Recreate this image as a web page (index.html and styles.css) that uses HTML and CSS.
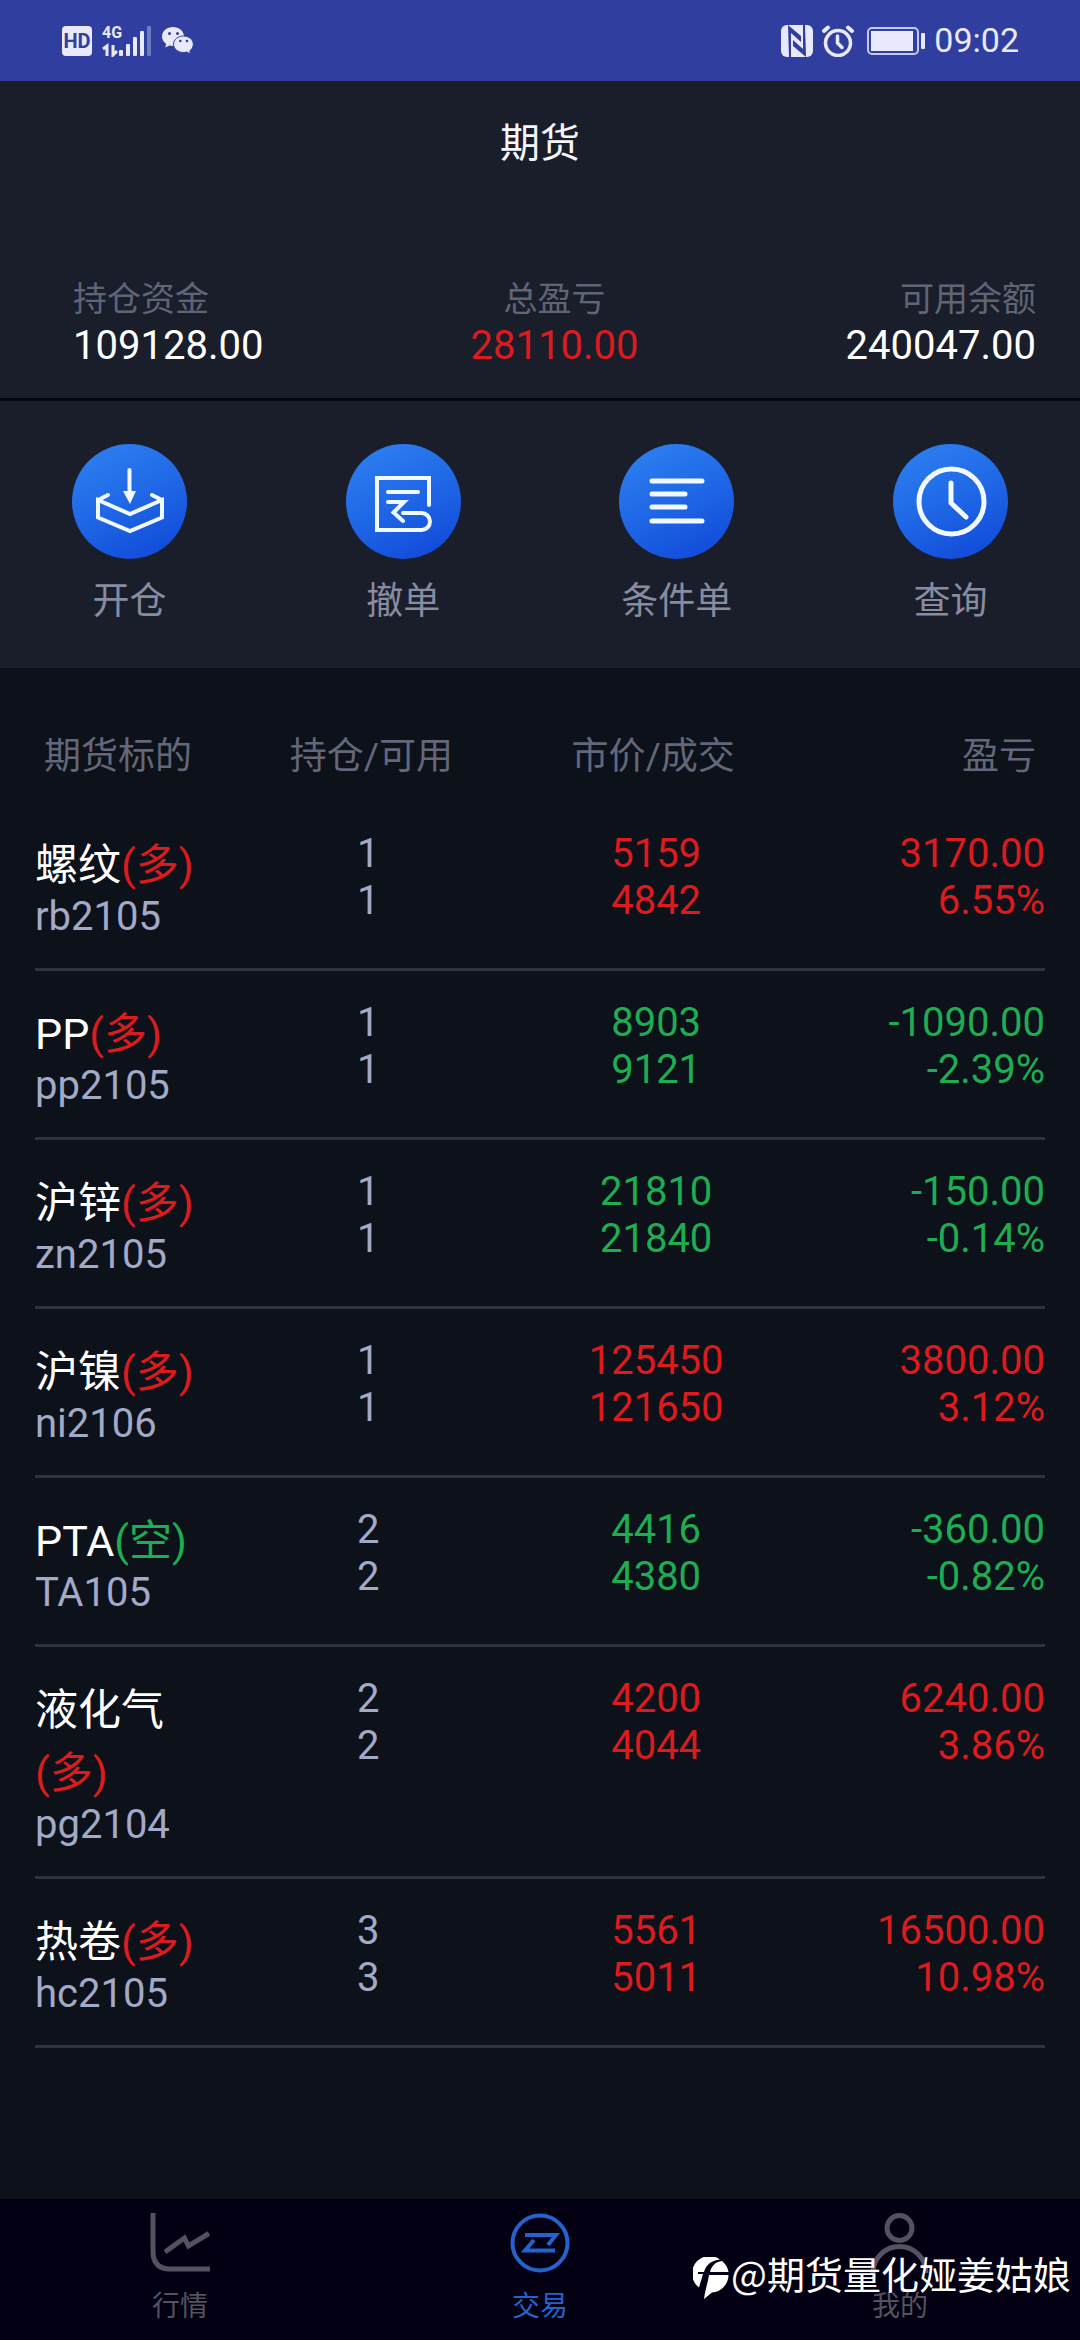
FILE: index.html
```html
<!DOCTYPE html>
<html lang="zh-CN">
<head>
<meta charset="utf-8">
<meta name="viewport" content="width=device-width, initial-scale=1">
<title>期货</title>
<link rel="stylesheet" href="styles.css">
</head>
<body>
<div class="status">
  <div class="status-left">
    <span class="hd">HD</span>
    <div class="signal">
      <span class="net">4G</span>
      <svg width="50" height="32" viewBox="0 0 50 32" aria-hidden="true">
        <path d="M1 24l4-3v10M11 20v10l4-4" fill="none" stroke="#e8e9fa" stroke-width="3"/>
        <g fill="#e8e9fa">
          <rect x="17" y="25" width="4" height="6" rx="1"/>
          <rect x="24" y="19" width="4" height="12" rx="1"/>
          <rect x="31" y="12" width="4" height="19" rx="1"/>
          <rect x="38" y="6" width="4" height="25" rx="1"/>
          <rect x="45" y="1" width="4" height="30" rx="1" opacity=".35"/>
        </g>
      </svg>
    </div>
    <svg width="32" height="30" viewBox="0 0 32 30" aria-hidden="true">
      <path d="M11 1C5 1 0 5 0 10.500C0 13.500 1.500 16 4 17.800L3.400 21.500L7.500 19.400C8.600 19.700 9.800 19.900 11 19.900C17 19.900 22 15.700 22 10.500C22 5 17 1 11 1z" fill="#e8e9fa"/>
      <path d="M21.500 10C16 10 11.500 13.600 11.500 18.200S16 26.500 21.500 26.500C22.700 26.500 23.800 26.300 24.800 26L28.600 28L27.800 24.800C30 23.300 31.300 21 31.300 18.200C31.300 13.600 27 10 21.500 10z" fill="#e8e9fa" stroke="#303f9f" stroke-width="1"/>
      <g fill="#303f9f"><circle cx="7.500" cy="7.500" r="1.500"/><circle cx="15.500" cy="7.500" r="1.500"/><circle cx="18.300" cy="15" r="1.300"/><circle cx="25" cy="15" r="1.300"/></g>
    </svg>
  </div>
  <div class="status-right">
    <svg width="32" height="32" viewBox="0 0 32 32" aria-hidden="true">
      <rect width="32" height="32" rx="6" fill="#e8e9fa"/>
      <path d="M7 0L20 11V17L10 8V32H8zM25 32L12 21V15L22 24V0H24z" fill="#303f9f"/>
    </svg>
    <svg width="32" height="32" viewBox="0 0 32 32" fill="none" stroke="#e8e9fa" stroke-linecap="round" aria-hidden="true">
      <circle cx="16" cy="18" r="12.500" stroke-width="3.500"/>
      <path d="M15.500 11V18L20 22.500" stroke-width="3.500"/>
      <path d="M2 6L6 2.500M30 6L26 2.500" stroke-width="4"/>
    </svg>
    <svg class="battery" width="58" height="28" viewBox="0 0 58 28" aria-hidden="true">
      <rect x="1" y="1" width="50" height="26" rx="4" fill="none" stroke="#c3c8ef" stroke-width="2"/>
      <rect x="4" y="4" width="42" height="20" fill="#e8e9fa"/>
      <rect x="54" y="6" width="4" height="16" rx="1" fill="#e8e9fa"/>
    </svg>
    <time class="clock">09:02</time>
  </div>
</div>

<header class="top">
  <h1 class="title">期货</h1>
  <dl class="summary">
    <div class="sum"><dt>持仓资金</dt><dd>109128.00</dd></div>
    <div class="sum sum-mid"><dt>总盈亏</dt><dd class="up">28110.00</dd></div>
    <div class="sum sum-end"><dt>可用余额</dt><dd>240047.00</dd></div>
  </dl>
</header>

<div class="actions">
  <button class="action" type="button">
    <svg class="disc" viewBox="0 0 115 115" fill="none" stroke="#f1f8ff" stroke-width="4" aria-hidden="true">
      <path d="M57.500 26V48" stroke-linecap="round"/>
      <path d="M51 47H64L58 60z" fill="#f1f8ff" stroke="none"/>
      <path d="M26 56L58 70L90 56V73.500L58 87L26 73.500z"/>
      <path d="M26 56L36 51M90 56L80 51" stroke-linecap="round"/>
    </svg>
    <span>开仓</span>
  </button>
  <button class="action" type="button">
    <svg class="disc" viewBox="0 0 115 115" fill="none" stroke="#f1f8ff" stroke-width="4" stroke-linecap="round" aria-hidden="true">
      <path d="M83 61V34H31V86H75.500A8.500 8.500 0 0 0 75.500 69H57"/>
      <path d="M42 48H72M42 58H58L47.500 68.500L57 77"/>
    </svg>
    <span>撤单</span>
  </button>
  <button class="action" type="button">
    <svg class="disc" viewBox="0 0 115 115" fill="none" stroke="#f1f8ff" stroke-width="5" stroke-linecap="round" aria-hidden="true">
      <path d="M33 37H83M33 50H66M33 63H66M33 77H83"/>
    </svg>
    <span>条件单</span>
  </button>
  <button class="action" type="button">
    <svg class="disc" viewBox="0 0 115 115" fill="none" stroke="#f1f8ff" stroke-width="5" stroke-linecap="round" stroke-linejoin="round" aria-hidden="true">
      <circle cx="58.500" cy="57.500" r="32.500"/>
      <path d="M58 39V59L73 73"/>
    </svg>
    <span>查询</span>
  </button>
</div>

<main class="positions">
  <table class="table">
    <thead>
      <tr><th class="c-name">期货标的</th><th class="c-hold">持仓/可用</th><th class="c-price">市价/成交</th><th class="c-gain">盈亏</th></tr>
    </thead>
    <tbody>
      <tr>
        <td><div class="name">螺纹<span class="side up">(多)</span></div><div class="code">rb2105</div></td>
        <td>1<br>1</td><td class="up">5159<br>4842</td><td class="up">3170.00<br>6.55%</td>
      </tr>
      <tr>
        <td><div class="name">PP<span class="side up">(多)</span></div><div class="code">pp2105</div></td>
        <td>1<br>1</td><td class="down">8903<br>9121</td><td class="down">-1090.00<br>-2.39%</td>
      </tr>
      <tr>
        <td><div class="name">沪锌<span class="side up">(多)</span></div><div class="code">zn2105</div></td>
        <td>1<br>1</td><td class="down">21810<br>21840</td><td class="down">-150.00<br>-0.14%</td>
      </tr>
      <tr>
        <td><div class="name">沪镍<span class="side up">(多)</span></div><div class="code">ni2106</div></td>
        <td>1<br>1</td><td class="up">125450<br>121650</td><td class="up">3800.00<br>3.12%</td>
      </tr>
      <tr>
        <td><div class="name">PTA<span class="side down">(空)</span></div><div class="code">TA105</div></td>
        <td>2<br>2</td><td class="down">4416<br>4380</td><td class="down">-360.00<br>-0.82%</td>
      </tr>
      <tr>
        <td><div class="name">液化气<span class="side up">(多)</span></div><div class="code">pg2104</div></td>
        <td>2<br>2</td><td class="up">4200<br>4044</td><td class="up">6240.00<br>3.86%</td>
      </tr>
      <tr>
        <td><div class="name">热卷<span class="side up">(多)</span></div><div class="code">hc2105</div></td>
        <td>3<br>3</td><td class="up">5561<br>5011</td><td class="up">16500.00<br>10.98%</td>
      </tr>
    </tbody>
  </table>
</main>

<nav class="tabs">
  <a class="tab" href="#market">
    <svg width="60" height="60" viewBox="0 0 60 60" fill="none" stroke="currentColor" stroke-width="5" aria-hidden="true">
      <path d="M3 0V38Q3 56 20 56H60"/>
      <path d="M15 39L34.500 25L38.500 33L59 20.500"/>
    </svg>
    <span>行情</span>
  </a>
  <a class="tab tab-on" href="#trade" aria-current="page">
    <svg width="60" height="60" viewBox="0 0 60 60" fill="none" stroke="currentColor" stroke-width="4" aria-hidden="true">
      <circle cx="30" cy="30" r="27.500"/>
      <path d="M15 22H46L38 32M24 27L15 37.500H45"/>
    </svg>
    <span>交易</span>
  </a>
  <a class="tab" href="#mine">
    <svg width="60" height="60" viewBox="0 0 60 60" fill="none" stroke="currentColor" stroke-width="5" aria-hidden="true">
      <circle cx="29.500" cy="15" r="12.500"/>
      <path d="M3 60A26.500 26.500 0 0 1 56 60"/>
    </svg>
    <span>我的</span>
  </a>
  <div class="mark">
    <svg width="36" height="42" viewBox="0 0 36 42" aria-hidden="true">
      <path d="M27 2.500A17.500 17.500 0 0 0 6 30.500L10 17H5V15H11C13 8 18 3.500 27 2.500z" fill="#fff"/>
      <path d="M29 4C22 5 18.500 9 17 15H35.500A17.500 17.500 0 0 0 29 4zM16 18C15 25 12 34 11 42L19 35.500A17.500 17.500 0 0 0 35.500 18z" fill="#fff"/>
    </svg>
    <span>@期货量化娅姜姑娘</span>
  </div>
</nav>
</body>
</html>
```
FILE: styles.css
```css
* { box-sizing: border-box; margin: 0; padding: 0; }

body {
  min-height: 100vh;
  display: flex;
  flex-direction: column;
  background: #0d111a;
  color: #a3aac8;
  font-family: Roboto, "Noto Sans CJK SC", sans-serif;
  font-size: 40px;
  line-height: 47px;
}

svg { display: block; flex: none; }
.up { color: #dc1b1e; }
.down { color: #1dad52; }

.status {
  height: 81px;
  padding: 0 61px 0 62px;
  display: flex;
  justify-content: space-between;
  align-items: center;
  background: #303f9f;
  color: #e8e9fa;
}
.status-left, .status-right { display: flex; align-items: center; gap: 10px; }
.status-right { gap: 9px; }
.hd {
  width: 30px;
  border-radius: 4px;
  background: #e8e9fa;
  color: #303f9f;
  font-size: 20px;
  font-weight: 700;
  line-height: 30px;
  text-align: center;
}
.signal { position: relative; }
.net {
  position: absolute;
  left: 0;
  top: 0;
  font-size: 16px;
  font-weight: 700;
  line-height: 16px;
}
.battery { margin-left: 4px; }
.clock { font-size: 34px; }

.top {
  padding: 33px 44px 29px 73px;
  background: #1a1e2b;
  border-bottom: 3px solid #020611;
}
.title {
  margin: 0 29px 102px 0;
  color: #f4f6fb;
  font-size: 40px;
  font-weight: 400;
  line-height: 60px;
  text-align: center;
}
.summary { display: flex; justify-content: space-between; }
.sum-mid { text-align: center; }
.sum-end { text-align: right; }
.sum dt { color: #606477; font-size: 34px; line-height: 46px; }
.sum dd { color: #fff; }
.sum dd.up { color: #dc1b1e; }

.actions {
  padding: 43px 72px 39px;
  display: flex;
  justify-content: space-between;
  background: #1a1e2b;
}
.action {
  width: 115px;
  display: flex;
  flex-direction: column;
  align-items: center;
  gap: 16px;
  border: 0;
  background: none;
  color: #888ca0;
  font: 37px/54px Roboto, "Noto Sans CJK SC", sans-serif;
  white-space: nowrap;
}
.disc {
  width: 115px;
  height: 115px;
  border-radius: 50%;
  background: linear-gradient(155deg, #2c7df0 10%, #1f67e6 50%, #1048d8 95%);
}

.positions { padding: 0 35px; }
.table { width: 100%; table-layout: fixed; border-collapse: collapse; }
th {
  padding: 61px 0 17px;
  color: #636779;
  font-size: 37px;
  font-weight: 400;
  line-height: 56px;
  white-space: nowrap;
}
.c-name { width: 18%; padding-left: 9px; text-align: left; }
.c-hold { width: 30%; padding-left: 6px; }
.c-price { width: 27%; padding-right: 6px; }
.c-gain { width: 25%; padding-right: 9px; text-align: right; }
td {
  padding: 28px 0;
  border-bottom: 3px solid #2f333e;
  text-align: center;
  vertical-align: top;
}
td:first-child { text-align: left; }
td:last-child { text-align: right; }
.name {
  margin-bottom: -4px;
  padding-top: 4px;
  color: #fff;
  font-size: 43px;
  line-height: 63px;
}
.side { display: inline-block; }

.tabs {
  position: relative;
  margin-top: auto;
  padding: 14px 0 12px;
  display: flex;
  background: #020012;
}
.tab {
  flex: 1;
  display: flex;
  flex-direction: column;
  align-items: center;
  gap: 13px;
  color: #53535f;
  font-size: 28px;
  line-height: 42px;
  text-decoration: none;
}
.tab-on { color: #2463cc; }
.mark {
  position: absolute;
  right: 9px;
  bottom: 39px;
  display: flex;
  align-items: center;
  gap: 2px;
  color: #fff;
  font-family: "Noto Sans CJK SC", sans-serif;
  font-size: 38px;
  line-height: 56px;
}
.mark svg { margin-top: 10px; }
```
